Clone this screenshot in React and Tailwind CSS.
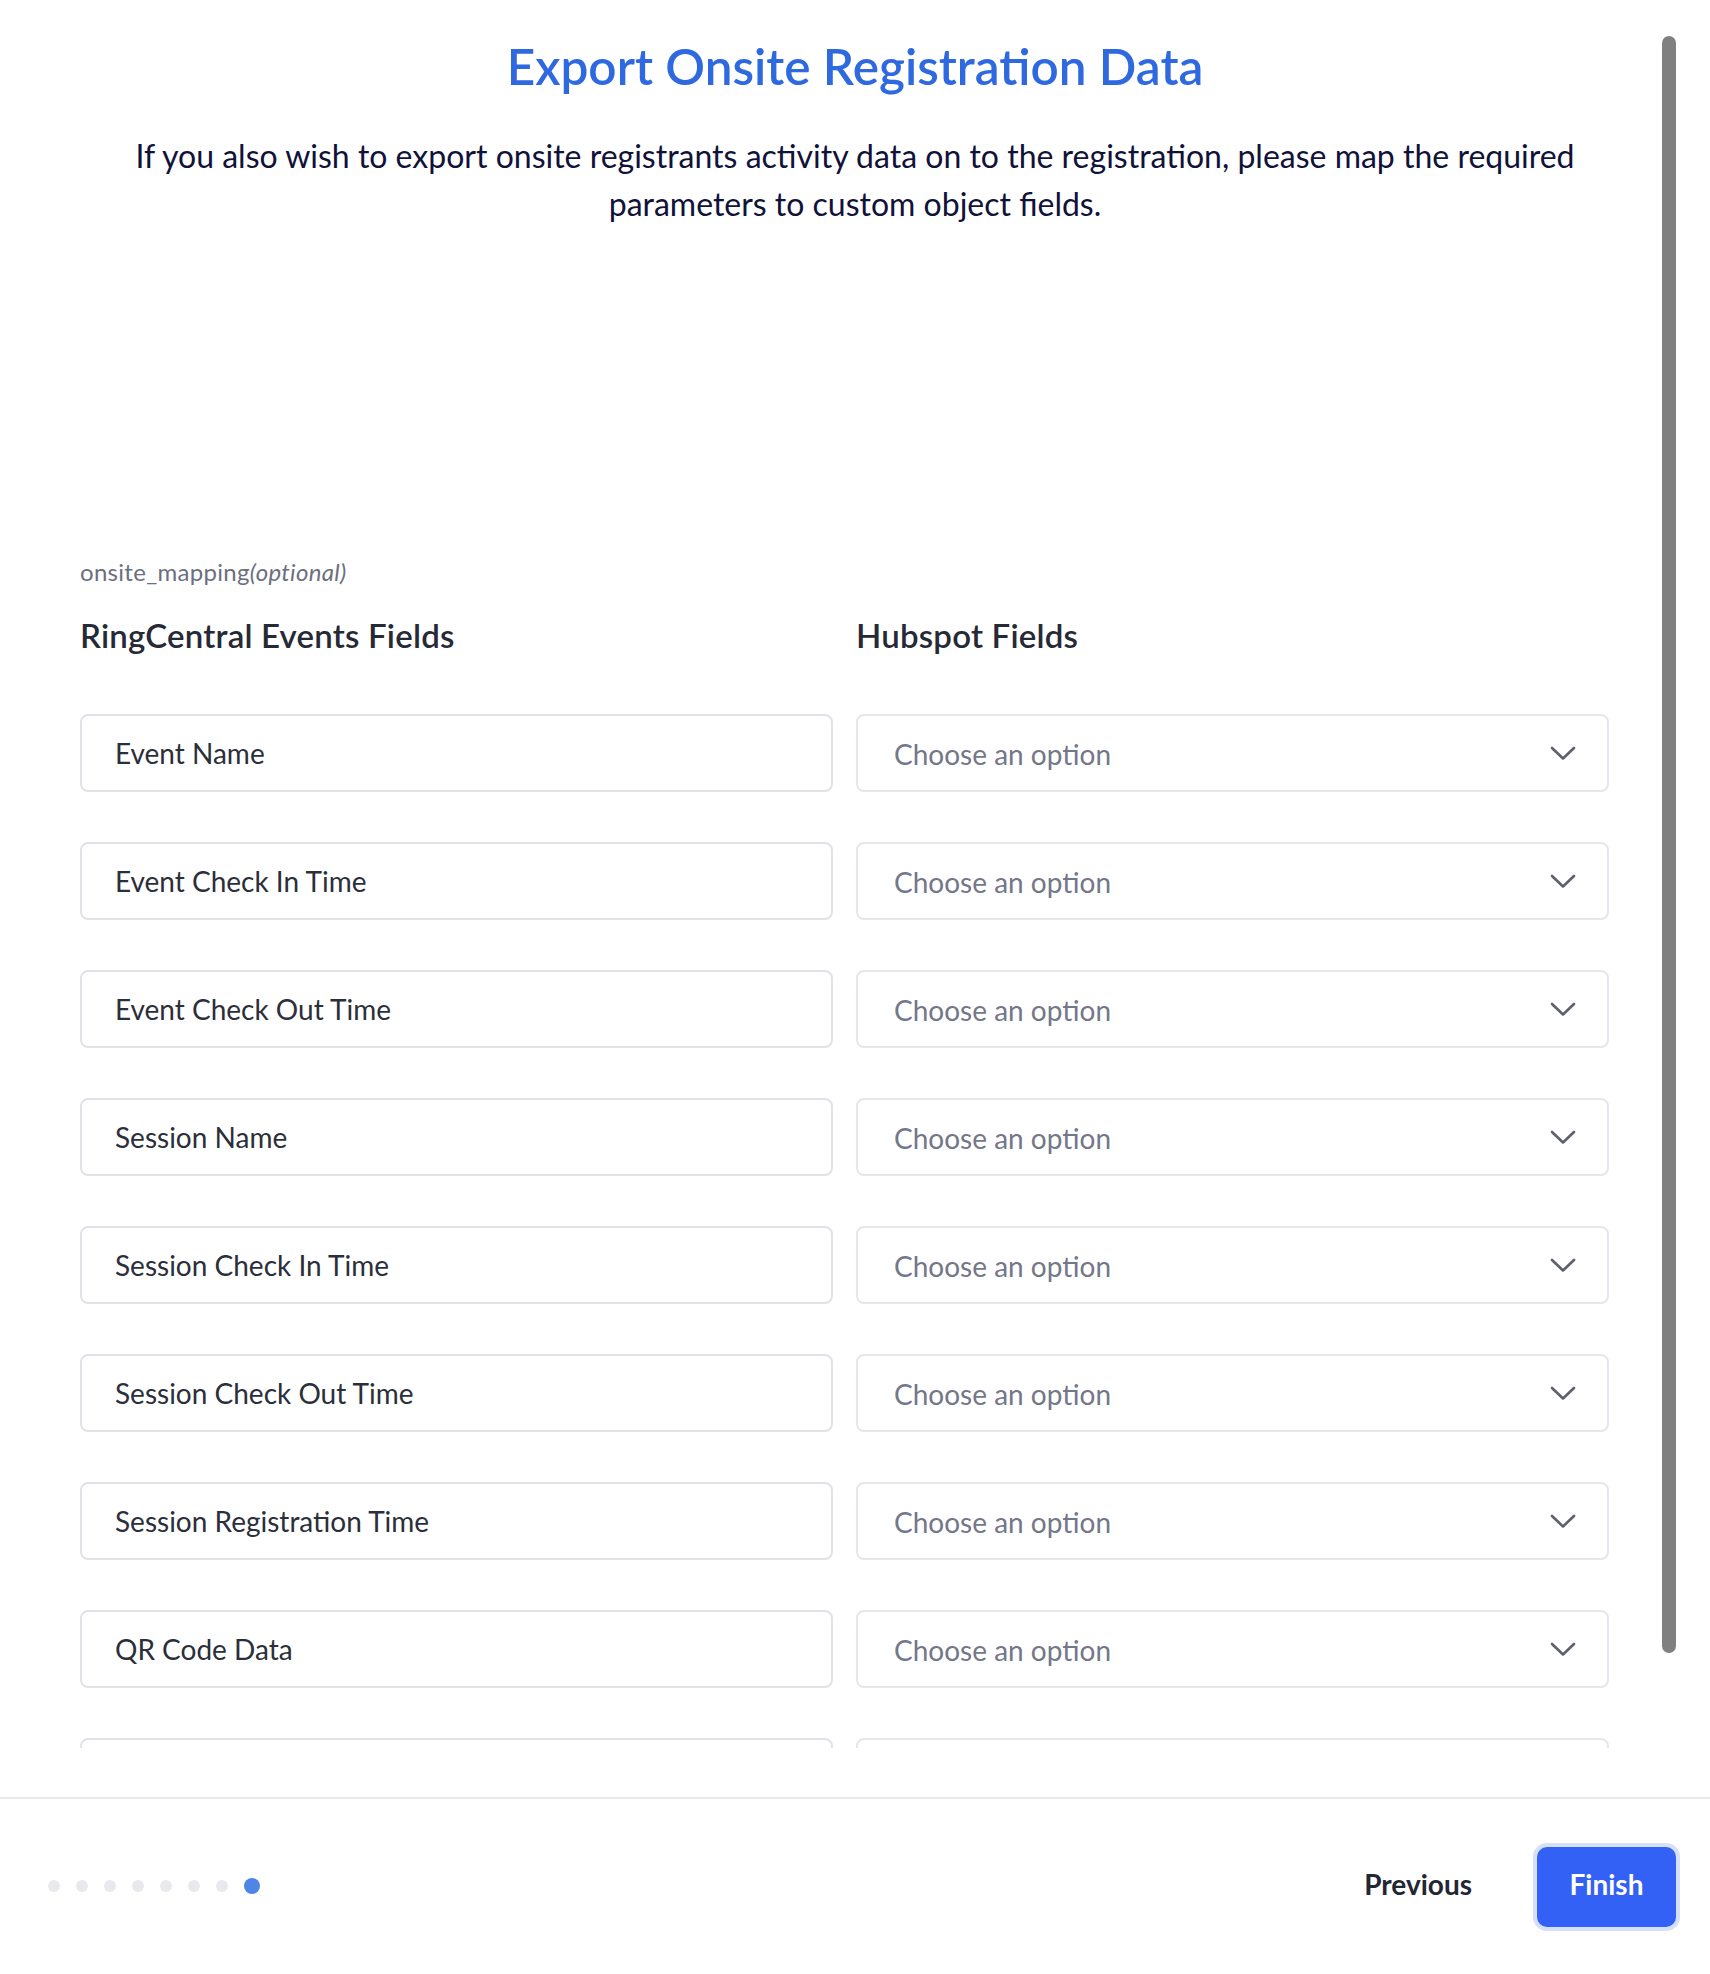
import React from 'react';

const fields = [
  'Event Name',
  'Event Check In Time',
  'Event Check Out Time',
  'Session Name',
  'Session Check In Time',
  'Session Check Out Time',
  'Session Registration Time',
  'QR Code Data',
];

function Chevron() {
  return (
    <svg width="26" height="15" viewBox="0 0 26 15" fill="none" className="shrink-0">
      <path d="M2 2 L13 12.5 L24 2" stroke="#5c6071" strokeWidth="2.6" strokeLinecap="round" strokeLinejoin="round" />
    </svg>
  );
}

function MappingRow({ label, empty }) {
  return (
    <div className="grid grid-cols-2 gap-x-[23px]">
      <div className="h-[78px] rounded-[8px] border-2 border-[#dfe3e8] flex items-center pl-[33px] text-[28px] text-[#2b2f3a]">
        {label}
      </div>
      <div className="h-[78px] rounded-[8px] border-2 border-[#e6e7ec] flex items-center justify-between pl-[36px] pr-[31px] text-[28px] text-[#747789]">
        {!empty && <span className="pt-[2px]">Choose an option</span>}
        {!empty && <Chevron />}
      </div>
    </div>
  );
}

export default function App() {
  return (
    <div className="w-full h-[1974px] bg-white flex flex-col font-['Lato',sans-serif] overflow-hidden">
      {/* scrolling body */}
      <div className="relative h-[1748px] overflow-hidden shrink-0">
        <div className="text-center pt-[30px]">
          <h1 className="text-[49.5px] leading-[72px] font-semibold text-[#2f69e0]">
            Export Onsite Registration Data
          </h1>
          <p className="mt-[30px] text-[32px] leading-[48px] text-[#10123a]">
            If you also wish to export onsite registrants activity data on to the registration, please map the required
            <br />
            parameters to custom object fields.
          </p>
        </div>

        <div className="pl-[80px] pr-[101px]">
          <div className="mt-[328px] text-[24px] leading-[31px] tracking-[0.3px] text-[#6b6f80]">
            onsite_mapping<span className="italic">(optional)</span>
          </div>
          <div className="mt-[26px] grid grid-cols-2 gap-x-[23px] text-[33px] leading-[45px] tracking-[0.2px] font-semibold text-[#262a36]">
            <div>RingCentral Events Fields</div>
            <div>Hubspot Fields</div>
          </div>
          <div className="mt-[56px] flex flex-col gap-[50px]">
            {fields.map((f, i) => (
              <MappingRow key={i} label={f} />
            ))}
            <MappingRow label="" empty />
          </div>
        </div>

        {/* scrollbar thumb */}
        <div className="absolute left-[1662px] top-[36px] w-[14px] h-[1617px] rounded-full bg-[#808080]" />
      </div>

      <div className="h-[49px] shrink-0" />

      {/* footer */}
      <div className="border-t-2 border-[#e8e9ee] flex-1 flex items-center justify-between pl-[48px] pr-[34px]">
        <div className="flex items-center gap-4 pb-[2px]">
          {[0, 1, 2, 3, 4, 5, 6].map((d) => (
            <span key={d} className="w-[12px] h-[12px] rounded-full bg-[#e8e9ee]" />
          ))}
          <span className="w-[16px] h-[16px] rounded-full bg-[#4f86e6]" />
        </div>
        <div className="flex items-center gap-[65px]">
          <button className="text-[28px] font-bold text-[#232733] pb-[6px]">Previous</button>
          <button className="w-[139px] h-[80px] rounded-[10px] bg-[#3360f5] text-white text-[28px] font-bold ring-4 ring-[#d6e0f8] pb-[5px]">
            Finish
          </button>
        </div>
      </div>
    </div>
  );
}
